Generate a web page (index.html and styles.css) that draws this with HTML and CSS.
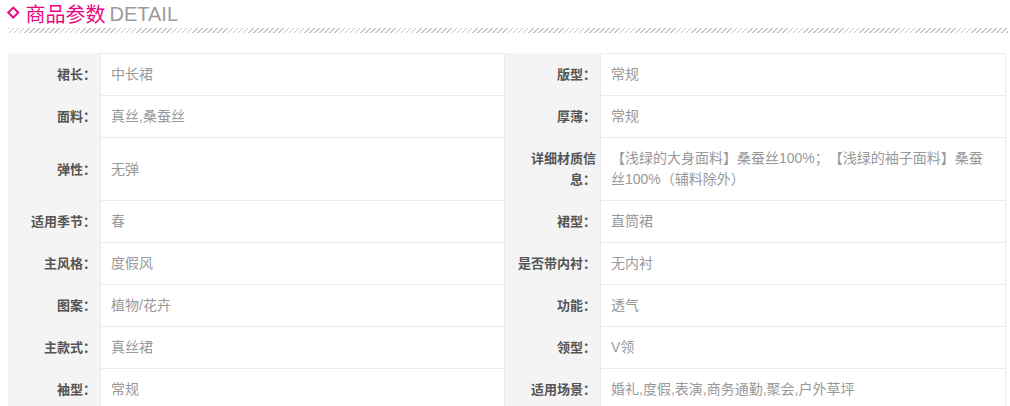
FILE: index.html
```html
<!DOCTYPE html>
<html lang="zh-CN">
<head>
<meta charset="utf-8">
<title>商品参数</title>
<link rel="stylesheet" href="styles.css">
</head>
<body>
<div class="section">
  <div class="title">
    <span class="diamond"></span>
    <span class="title-cn">商品参数</span>
    <span class="title-en">DETAIL</span>
  </div>
  <div class="hatch"></div>
  <div class="params">
    <div class="k">裙长：</div><div class="v">中长裙</div>
    <div class="k">版型：</div><div class="v">常规</div>

    <div class="k">面料：</div><div class="v">真丝,桑蚕丝</div>
    <div class="k">厚薄：</div><div class="v">常规</div>

    <div class="k">弹性：</div><div class="v">无弹</div>
    <div class="k">详细材质信息：</div><div class="v">【浅绿的大身面料】桑蚕丝100%；【浅绿的袖子面料】桑蚕丝100%（辅料除外）</div>

    <div class="k">适用季节：</div><div class="v">春</div>
    <div class="k">裙型：</div><div class="v">直筒裙</div>

    <div class="k">主风格：</div><div class="v">度假风</div>
    <div class="k">是否带内衬：</div><div class="v">无内衬</div>

    <div class="k">图案：</div><div class="v">植物/花卉</div>
    <div class="k">功能：</div><div class="v">透气</div>

    <div class="k">主款式：</div><div class="v">真丝裙</div>
    <div class="k">领型：</div><div class="v">V领</div>

    <div class="k">袖型：</div><div class="v">常规</div>
    <div class="k">适用场景：</div><div class="v">婚礼,度假,表演,商务通勤,聚会,户外草坪</div>
  </div>
</div>
</body>
</html>
```

FILE: styles.css
```css
html, body {
  margin: 0;
  padding: 0;
  background: #fff;
}
body {
  padding: 0 8px;
  font-family: "Liberation Sans", "Noto Sans CJK SC", sans-serif;
  text-spacing-trim: space-all;
}
.section {
  width: 1000px;
}
.title {
  display: flex;
  align-items: center;
  height: 28px;
  font-size: 20px;
  line-height: 28px;
}
.diamond {
  width: 4.5px;
  height: 4.5px;
  border: 2.3px solid #e8087f;
  transform: translateY(-2px) rotate(45deg);
  margin: 0 8.5px 0 0.5px;
  flex: none;
}
.title-cn {
  color: #e8087f;
  font-family: "Noto Sans CJK SC", sans-serif;
}
.title-en {
  color: #9b9b9b;
  margin-left: 4px;
  font-family: "Liberation Sans", "Noto Sans", sans-serif;
}
.hatch {
  height: 5px;
  margin-top: 0;
  background: repeating-linear-gradient(135deg, #c8c8c8 0 1.2px, transparent 1.2px 3.6px);
}
.params {
  margin-top: 20px;
  width: 998px;
  display: grid;
  grid-template-columns: 92px 405px 95px 406px;
  line-height: 21px;
}
.k {
  background: #f4f4f4;
  color: #555;
  font-size: 13px;
  font-weight: bold;
  text-align: right;
  padding: 10px 4px 10px 10px;
  border-top: 1px solid #f4f4f4;
  display: flex;
  align-items: center;
  justify-content: flex-end;
  box-sizing: border-box;
}
.v {
  color: #999;
  font-size: 14px;
  padding: 10px 10px;
  border-top: 1px solid #ebebeb;
  border-left: 1px solid #ebebeb;
  display: flex;
  align-items: center;
  box-sizing: border-box;
}
.v:nth-child(4n) {
  border-right: 1px solid #ebebeb;
}
.v:nth-child(4n+2) {
  border-right: 1px solid #ebebeb;
}
```
